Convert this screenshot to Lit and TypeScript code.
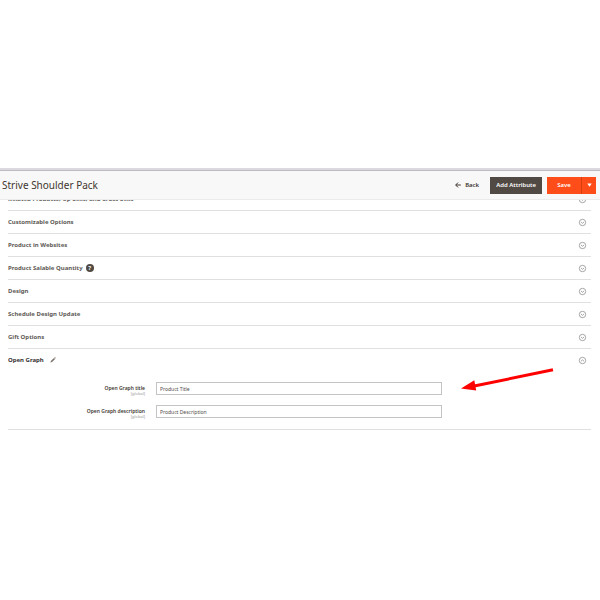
import { LitElement, html, css, svg } from "lit";
import { customElement, property } from "lit/decorators.js";

@customElement("section-toggle")
class SectionToggle extends LitElement {
  @property() label = "";
  @property({ type: Boolean }) open = false;

  static styles = css`
    :host { display: block; flex: none; }
    button {
      display: block;
      width: 9px;
      height: 9px;
      padding: 0;
      border: 0;
      background: none;
      cursor: pointer;
    }
    svg { display: block; width: 9px; height: 9px; }
  `;

  render() {
    const chevron = this.open ? "M3 5.2 L4.5 3.9 L6 5.2" : "M3 4 L4.5 5.3 L6 4";
    return html`<button type="button" aria-label=${this.label} aria-expanded=${this.open}>
      <svg viewBox="0 0 9 9" fill="none" stroke="#8f8f8f">
        <circle cx="4.5" cy="4.5" r="3.2" stroke-width="0.8"></circle>
        ${svg`<path d=${chevron} stroke-width="0.8"></path>`}
      </svg>
    </button>`;
  }
}

const sections = [
  { title: "Related Products, Up-Sells, and Cross-Sells" },
  { title: "Customizable Options" },
  { title: "Product in Websites" },
  { title: "Product Salable Quantity", help: true },
  { title: "Design" },
  { title: "Schedule Design Update" },
  { title: "Gift Options" },
];

const fields = [
  { id: "og-title", label: "Open Graph title", value: "Product Title" },
  { id: "og-description", label: "Open Graph description", value: "Product Description" },
];

@customElement("app-root")
class AppRoot extends LitElement {
  static styles = css`
    :host {
      display: block;
      min-height: 100vh;
      box-sizing: border-box;
      padding-top: 168px;
      background: #fff;
      color: #41362f;
      font-family: "Noto Sans", "Open Sans", sans-serif;
      font-size: 6px;
      line-height: 8px;
    }
    h1, h2 { margin: 0; }
    button, input { font: inherit; box-sizing: border-box; }
    .frame { height: 2px; background: #dcdae0; }
    .header {
      display: flex;
      align-items: center;
      justify-content: space-between;
      height: 30px;
      box-sizing: border-box;
      padding: 0 4px 0 2px;
      border-top: 1px solid #bdbbc0;
      border-bottom: 1px solid #ebebeb;
      background: #f8f8f8;
    }
    .title { font-size: 10px; line-height: 14px; font-weight: 400; }
    .actions { display: flex; align-items: center; gap: 5px; }
    .actions button {
      height: 17px;
      border: 0;
      padding: 0 6px;
      font-weight: 600;
      cursor: pointer;
    }
    .actions .back {
      display: flex;
      align-items: center;
      gap: 4px;
      background: none;
      color: #41362f;
    }
    .back svg { width: 6px; height: 6px; }
    .actions .attribute { background: #514943; color: #fff; }
    .split { display: flex; }
    .actions .save { width: 34px; padding: 0; background: #ff4d1a; color: #fff; }
    .actions .more {
      display: grid;
      place-items: center;
      width: 15px;
      padding: 0;
      border-left: 1px solid #d63f10;
      background: #ff4d1a;
    }
    .more svg { width: 5px; height: 4px; }
    .content { overflow: hidden; padding: 0 9px 0 8px; }
    .sections { margin-top: -12px; }
    .row {
      display: flex;
      align-items: center;
      gap: 3px;
      height: 23px;
      box-sizing: border-box;
      padding-right: 4px;
      border-bottom: 1px solid #e0e0e0;
    }
    .row h2 { font-size: 6px; line-height: 8px; font-weight: 700; color: #605a56; }
    .row section-toggle { margin-left: auto; }
    .row.active { border-bottom-color: transparent; }
    .row.active h2 { color: #353030; margin-right: 3px; }
    .help {
      display: grid;
      place-items: center;
      width: 8px;
      height: 8px;
      border-radius: 50%;
      background: #514943;
      color: #fff;
      font-weight: 700;
    }
    .pencil { width: 6px; height: 6px; }
    .form {
      display: grid;
      grid-template-columns: 137fr 286fr 138fr;
      column-gap: 11px;
      row-gap: 10px;
      padding: 10px 0 11px;
      border-bottom: 1px solid #e0e0e0;
    }
    .form label {
      grid-column: 1;
      height: 13px;
      text-align: right;
      font-size: 5px;
      line-height: 6px;
      padding-top: 3px;
      box-sizing: border-box;
      font-weight: 600;
      white-space: nowrap;
    }
    .scope { display: block; font-size: 4px; line-height: 5px; font-weight: 400; color: #999; }
    .form input {
      grid-column: 2;
      width: 100%;
      min-width: 0;
      height: 13px;
      margin: 0;
      padding: 0 3px;
      border: 1px solid #c4c4c4;
      border-radius: 0;
      background: #fff;
      color: #504b48;
      font-size: 5px;
    }
    .note { grid-column: 3; grid-row: 1; position: relative; }
    .note svg { position: absolute; left: 8px; top: -14px; width: 94px; height: 24px; }
  `;

  render() {
    return html`
      <div class="frame"></div>
      <header class="header">
        <h1 class="title">Strive Shoulder Pack</h1>
        <div class="actions">
          <button class="back" type="button">
            <svg viewBox="0 0 6 6" fill="none" stroke="#41362f" aria-hidden="true">
              <path d="M3 0.6 L0.7 3 L3 5.4 M0.8 3 H5.8" stroke-width="1"></path>
            </svg>
            Back
          </button>
          <button class="attribute" type="button">Add Attribute</button>
          <div class="split">
            <button class="save" type="button">Save</button>
            <button class="more" type="button" aria-label="More save options">
              <svg viewBox="0 0 5 4" aria-hidden="true"><path d="M0.3 0.4 H4.7 L2.5 3.7 Z" fill="#fff"></path></svg>
            </button>
          </div>
        </div>
      </header>
      <main class="content">
        <div class="sections">
          ${sections.map(
            (s) => html`<div class="row">
              <h2>${s.title}</h2>
              ${s.help ? html`<span class="help">?</span>` : ""}
              <section-toggle label=${s.title}></section-toggle>
            </div>`
          )}
          <div class="row active">
            <h2>Open Graph</h2>
            <svg class="pencil" viewBox="0 0 6 6" aria-hidden="true">
              <path d="M0.4 5.6 L0.9 4 L4 0.9 L5.1 2 L2 5.1 Z M4.4 0.6 L4.9 0.1 L5.9 1.1 L5.4 1.6 Z" fill="#77706b"></path>
            </svg>
            <section-toggle label="Open Graph" open></section-toggle>
          </div>
        </div>
        <form class="form">
          ${fields.map(
            (f) => html`<label for=${f.id}>${f.label}<span class="scope">[global]</span></label>
              <input id=${f.id} type="text" .value=${f.value} />`
          )}
          <div class="note">
            <svg viewBox="0 0 94 24" aria-hidden="true">
              <path d="M12 18.3 L92 1.8" stroke="#f00" stroke-width="3" fill="none"></path>
              <path d="M0 20.4 L13.3 12.3 L15.2 22.6 Z" fill="#f00"></path>
            </svg>
          </div>
        </form>
      </main>
    `;
  }
}
